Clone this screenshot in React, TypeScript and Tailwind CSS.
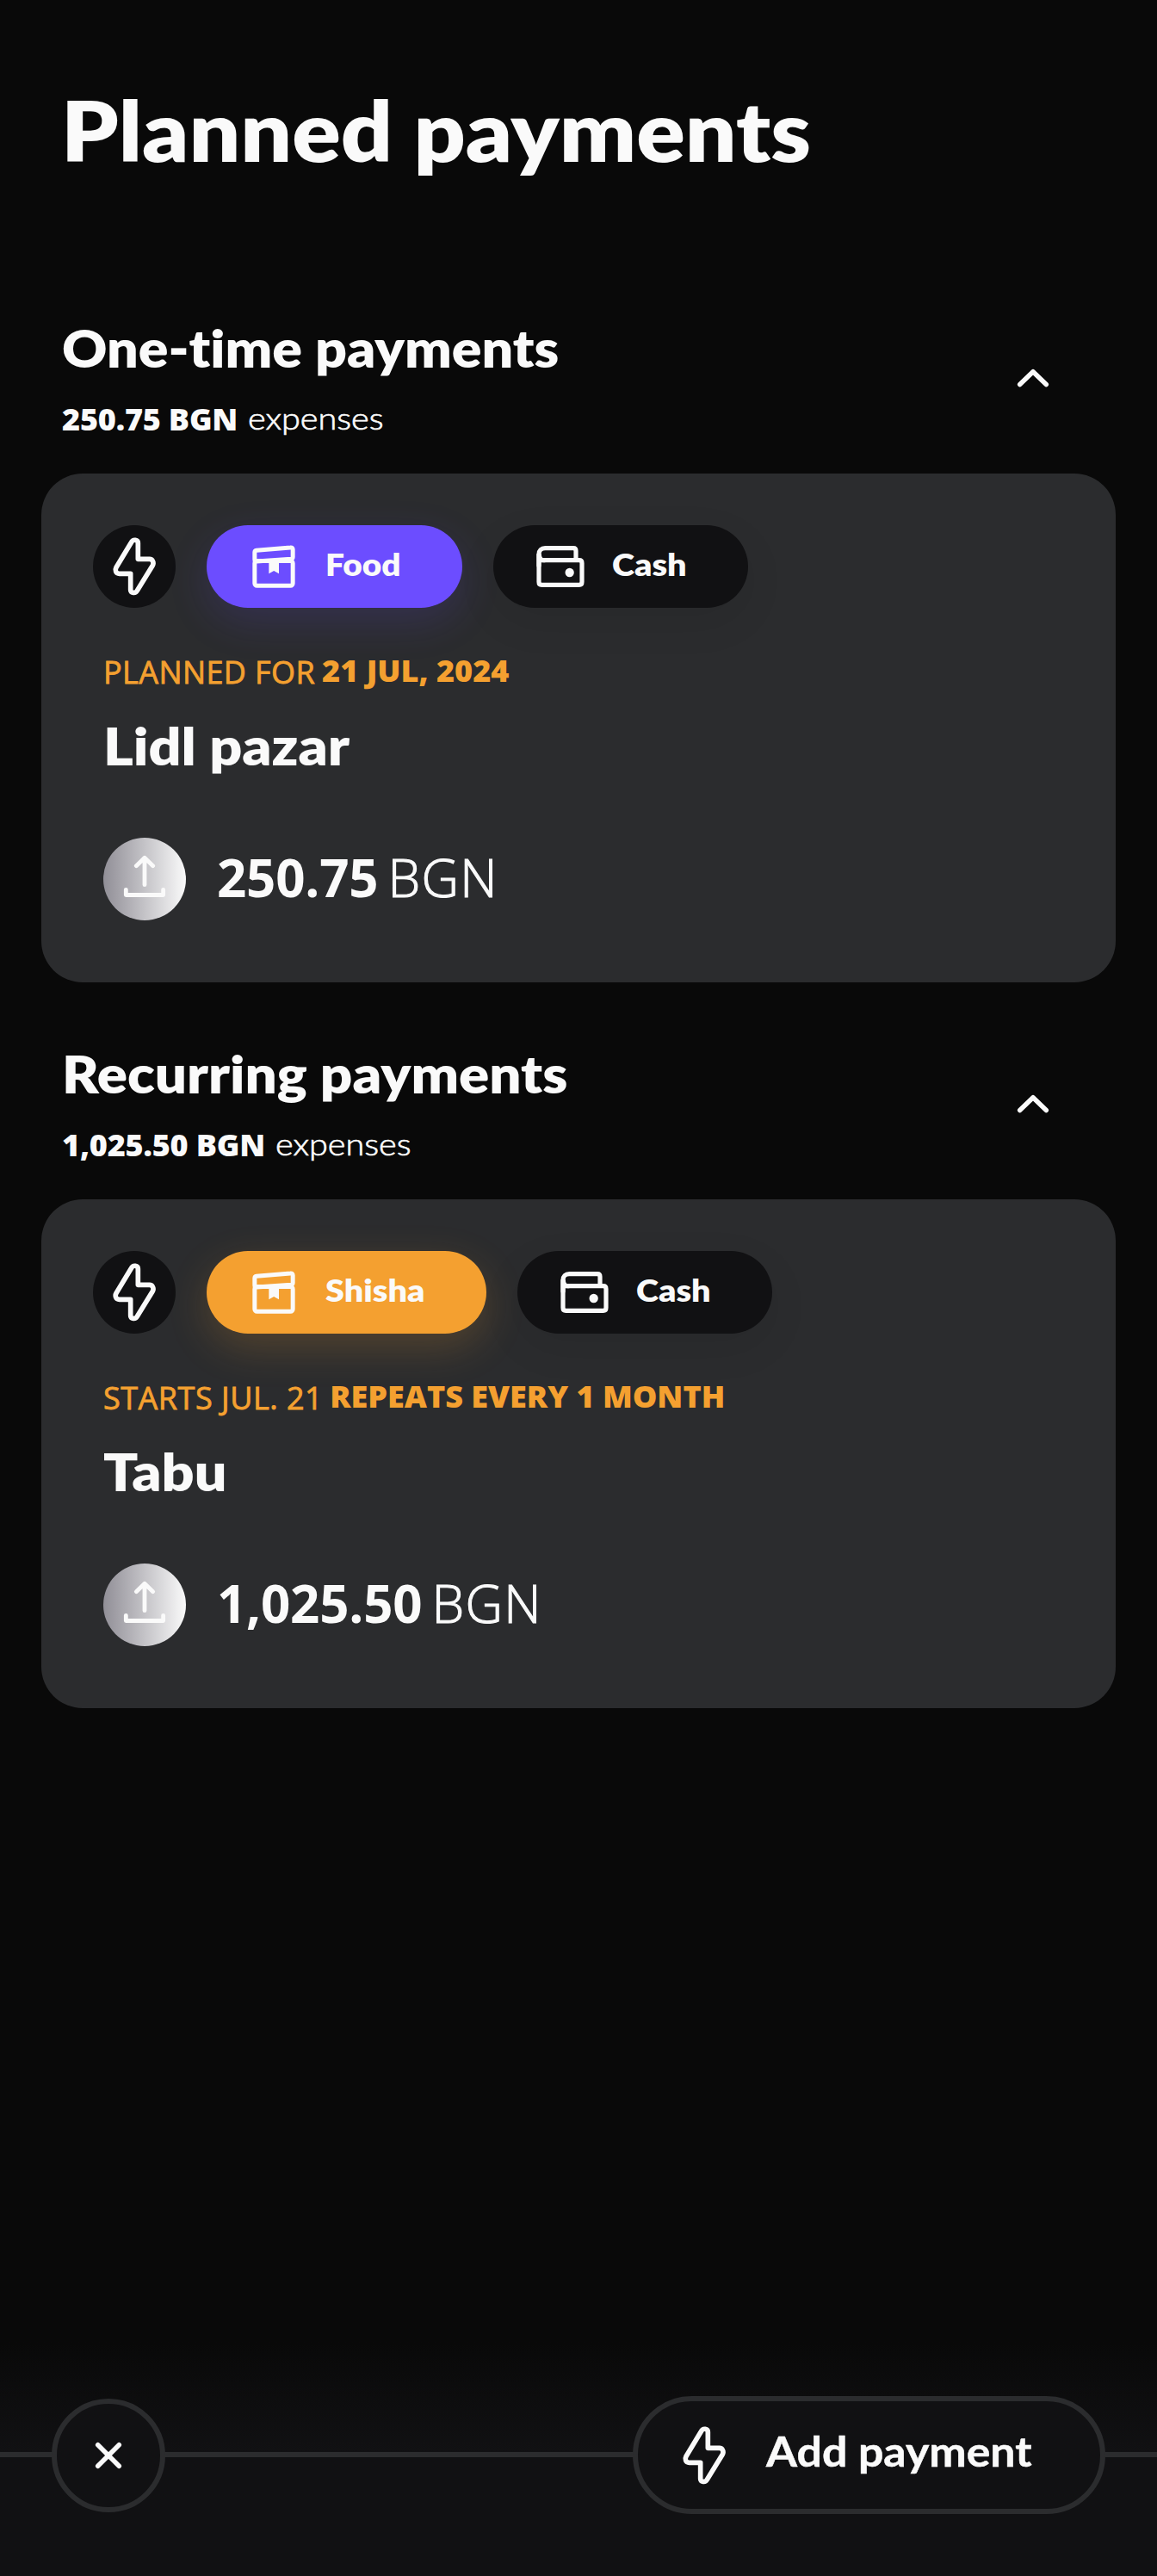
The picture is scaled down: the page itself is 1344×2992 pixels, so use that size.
import React from "react";

function BoltIcon() {
  return (
    <svg viewBox="54 60 288 288" className="size-24 shrink-0" fill="none" stroke="#fafafa" strokeWidth="17" strokeLinejoin="round">
      <path d="M211 178V122C211 110 194 108 188 119L135 207C130 216 133 229 146 229H185V285C185 297 202 299 208 288L262 200C267 191 262 178 251 178Z" />
    </svg>
  );
}

function BoxIcon() {
  return (
    <svg viewBox="576 96 216 216" className="size-18 shrink-0" fill="none" stroke="#fafafa" strokeWidth="15" strokeLinejoin="round">
      <path d="M617.500 179V155Q617.500 149 624 148L742 138Q750.500 137 750.500 145V171Q750.500 177 744 178L624 186Q617.500 186 617.500 179Z" />
      <rect x="617.500" y="184.500" width="133" height="86" rx="8" />
      <path d="M667 186H702V229L684.500 219L667 229Z" fill="#fafafa" stroke="none" />
    </svg>
  );
}

function WalletIcon() {
  return (
    <svg viewBox="195 96 216 216" className="size-18 shrink-0" fill="none" stroke="#fafafa" strokeWidth="15.500" strokeLinejoin="round">
      <path d="M357 182V149Q357 140 348 140H250C236 140 228 148 228 161V258Q228 268 238 268H368Q378 268 378 258V192Q378 182 368 182H245C236 182 229 174 229 161" />
      <path d="M228 160V200V182H250" />
      <circle cx="335" cy="225" r="15.500" fill="#fafafa" stroke="none" />
    </svg>
  );
}

function ExpenseIcon() {
  return (
    <svg viewBox="60 69 288 288" className="size-24 shrink-0 rounded-full bg-linear-to-r from-[#918f97] to-[#fafafa]" fill="none" stroke="#fafafa" strokeWidth="14.500" strokeLinecap="round" strokeLinejoin="round">
      <path d="M204 233V139M175 167L204 139L233 167" />
      <path d="M139 250V268.500H269V250" />
    </svg>
  );
}

function ChevronUp() {
  return (
    <svg viewBox="0 0 72 72" className="size-18 shrink-0" fill="none" stroke="#fafafa" strokeWidth="5.500" strokeLinecap="round" strokeLinejoin="round">
      <path d="M20.700 43.500L36 28.700L51.300 43.500" />
    </svg>
  );
}

type PaymentProps = {
  title: string;
  titleClass: string;
  total: string;
  category: string;
  categoryClass: string;
  categoryTextClass: string;
  when: string;
  whenClass: string;
  schedule: string;
  name: string;
  amount: string;
};

function PaymentSection(p: PaymentProps) {
  return (
    <section>
      <header className="flex h-[132px] items-center justify-between pl-18 pr-[108px]">
        <div className="flex flex-col gap-[35px] pt-px">
          <h2 className={`origin-left text-[60px] leading-none font-extrabold whitespace-nowrap ${p.titleClass}`}>{p.title}</h2>
          <div className="flex text-4xl leading-none">
            <span className="font-['Open_Sans',sans-serif] text-[36px] leading-none font-extrabold tracking-[-0.2px]">{p.total} BGN</span>
            <span className="-mt-0.5 ml-3 origin-left scale-x-[1.1] text-[36px] leading-none font-light [-webkit-text-stroke:0.7px]">expenses</span>
          </div>
        </div>
        <ChevronUp />
      </header>
      <article className="mx-12 mt-[45px] h-[591px] rounded-[48px] bg-[#2b2c2e] px-[60px] pt-[60px]">
        <div className="flex gap-9">
          <div className="size-24 rounded-full bg-[#111113]">
            <BoltIcon />
          </div>
          <div className={`flex h-24 items-center gap-6 rounded-full pl-[42px] ${p.categoryClass}`}>
            <BoxIcon />
            <span className={`origin-left pb-1.5 text-[36px] leading-none font-extrabold ${p.categoryTextClass}`}>{p.category}</span>
          </div>
          <div className="flex h-24 w-[296px] items-center gap-6 rounded-full bg-[#111113] pl-[42px] shadow-[0_16px_48px_rgba(17,17,19,0.08)]">
            <WalletIcon />
            <span className="origin-left scale-x-[1.1] pb-1.5 text-[36px] leading-none font-extrabold">Cash</span>
          </div>
        </div>
        <div className="relative pl-3">
          <p className="mt-[54px] flex gap-2 font-['Open_Sans',sans-serif] text-[36px] leading-none text-[#f4a030]">
            <span className={`mt-[3px] font-normal [-webkit-text-stroke:0.8px] ${p.whenClass}`}>{p.when}</span>
            <span className="mt-px font-extrabold">{p.schedule}</span>
          </p>
          <h3 className="mt-[37px] origin-left scale-x-[1.105] text-[60px] leading-none font-extrabold">{p.name}</h3>
          <div className="mt-[77px] flex items-center font-['Open_Sans',sans-serif] text-[60px] leading-none">
            <ExpenseIcon />
            <span className="ml-9 pb-1 font-bold tracking-[-0.2px]">{p.amount}</span>
            <span className="ml-[11px] pb-1 font-light tracking-[1.4px] [-webkit-text-stroke:1.1px]">BGN</span>
          </div>
        </div>
      </article>
    </section>
  );
}

export default function App() {
  return (
    <main className="flex h-[2992px] w-[1344px] flex-col overflow-hidden bg-[#090909] font-['Lato',sans-serif] text-[#fafafa] [font-variant-ligatures:none]">
      <h1 className="mt-[103px] ml-[71px] origin-left scale-x-[1.094] text-[96px] leading-none font-extrabold">Planned payments</h1>
      <div className="mt-[174px] flex flex-col gap-[75px]">
        <PaymentSection
          title="One-time payments"
          titleClass="scale-x-[1.074]"
          total="250.75"
          category="Food"
          categoryClass="w-[297px] bg-[#6c4dff] shadow-[0_16px_48px_rgba(108,77,255,0.16)]"
          categoryTextClass="scale-x-[1.076]"
          when="PLANNED FOR"
          whenClass="tracking-[0.4px]"
          schedule="21 JUL, 2024"
          name="Lidl pazar"
          amount="250.75"
        />
        <PaymentSection
          title="Recurring payments"
          titleClass="scale-x-[1.09]"
          total="1,025.50"
          category="Shisha"
          categoryClass="w-[325px] bg-[#f4a030] shadow-[0_16px_48px_rgba(244,160,48,0.2)]"
          categoryTextClass="scale-x-[1.098]"
          when="STARTS JUL. 21"
          whenClass="tracking-[0.5px]"
          schedule="REPEATS EVERY 1 MONTH"
          name="Tabu"
          amount="1,025.50"
        />
      </div>
      <footer className="relative mt-auto h-[272px] bg-[linear-gradient(to_bottom,#090909_0px,#111113_130px)] px-[60px] pt-[63px]">
        <div className="absolute inset-x-0 top-32 h-1.5 bg-[#2b2c2e]" />
        <div className="relative flex items-center justify-between">
          <button className="flex size-[132px] items-center justify-center rounded-full border-[6px] border-[#2b2c2e] bg-[#111113]">
            <svg viewBox="0 0 72 72" className="size-18" fill="none" stroke="#fafafa" strokeWidth="5.500" strokeLinecap="round">
              <path d="M23.700 23.700L48.300 48.300M48.300 23.700L23.700 48.300" />
            </svg>
          </button>
          <button className="flex h-[137px] w-[549px] items-center rounded-full border-[6px] border-[#2b2c2e] bg-[#111113] pl-[29px]">
            <BoltIcon />
            <span className="ml-6 origin-left scale-x-[1.08] pb-2.5 text-[48px] leading-none font-bold whitespace-nowrap [-webkit-text-stroke:0.5px]">Add payment</span>
          </button>
        </div>
      </footer>
    </main>
  );
}
